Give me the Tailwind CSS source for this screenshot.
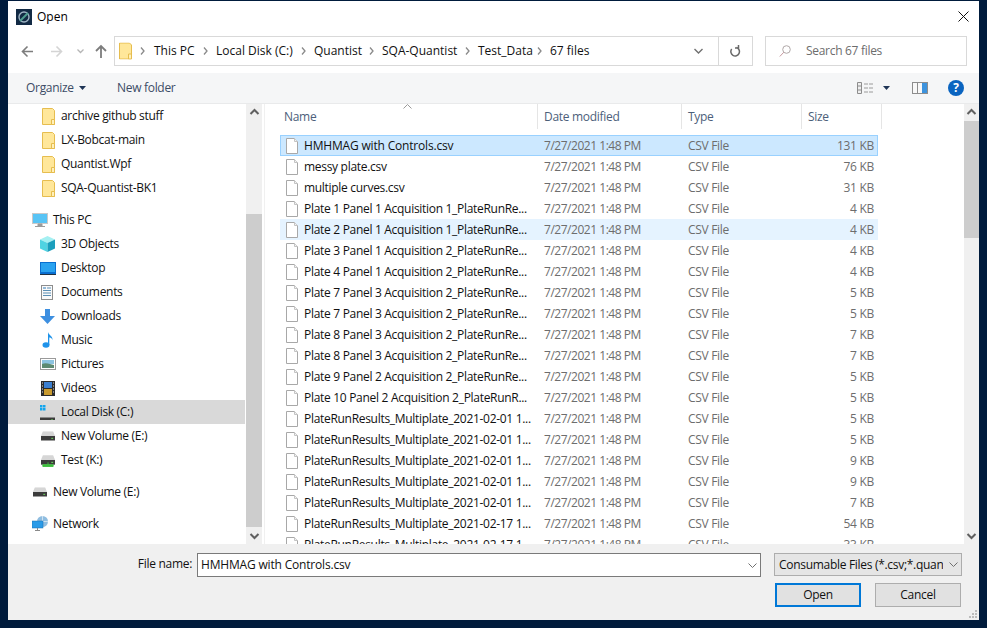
<!DOCTYPE html>
<html lang="en">
<head>
    <meta charset="UTF-8">
    <title>Open</title>
    <script src="https://cdn.jsdelivr.net/npm/@tailwindcss/browser@4"></script>
</head>
<body class="bg-[#001b3c] w-[987px] h-[628px] overflow-hidden pl-2 pt-px font-['Open_Sans',sans-serif] text-[12px] tracking-[-0.3px] text-black">
    <!-- shared icons -->
    <svg class="hidden">
        <symbol id="folder" viewBox="0 0 13 17">
            <path d="M.5.5h10l2 2v14H.5z" fill="#ffe79a" stroke="#e6bd4f"/>
            <path d="M9.500 11.500h3v5h-3z" fill="#fff0bb" stroke="#e6bd4f"/>
        </symbol>
        <symbol id="file" viewBox="0 0 12 16">
            <path d="M.5.5h8l3 3v12H.5z" fill="#fff" stroke="#a8a8a8"/>
            <path d="M8.500.5v3h3" fill="#f3f3f3" stroke="#c4c4c4"/>
        </symbol>
        <symbol id="drive" viewBox="0 0 15 10">
            <path d="M2 0h11l2 5H0z" fill="#d6d6d6"/>
            <rect y="5" width="15" height="5" fill="#3c3c3c"/>
            <rect x="11" y="7" width="2" height="1" fill="#6fe060"/>
        </symbol>
        <symbol id="sep" viewBox="0 0 5 8">
            <path d="M1 .5 4 4 1 7.500" fill="none" stroke="#8a8a8a" stroke-width="1.300"/>
        </symbol>
    </svg>

    <div class="w-[971px] h-[619px] bg-white flex flex-col">
        <!-- title bar -->
        <div class="h-[31px] shrink-0 flex items-center pl-2 pr-[10px]">
            <svg class="w-4 h-4 mr-[5px]" viewBox="0 0 16 16">
                <rect width="16" height="16" fill="#122a44"/>
                <circle cx="8" cy="8" r="5" fill="none" stroke="#9fb4c4" stroke-width="1.400"/>
                <path d="M4 12 12 4" stroke="#4f9d8f" stroke-width="2"/>
            </svg>
            <span class="flex-1 tracking-normal">Open</span>
            <svg class="w-[11px] h-[11px]" viewBox="0 0 11 11"><path d="M.5.5l10 10M10.500.5l-10 10" stroke="#111" fill="none"/></svg>
        </div>

        <!-- navigation bar -->
        <div class="h-[41px] shrink-0 flex pt-1 pl-[13px]">
            <svg class="w-3 h-[30px]" viewBox="0 0 12 30"><path d="M12 15.500H1.500M6.500 10.500l-5 5 5 5" fill="none" stroke="#7d7d7d" stroke-width="1.600"/></svg>
            <svg class="w-3 h-[30px] ml-[18px]" viewBox="0 0 12 30"><path d="M0 15.500h10.500M5.500 10.500l5 5-5 5" fill="none" stroke="#d4d4d4" stroke-width="1.600"/></svg>
            <svg class="w-[7px] h-[30px] ml-[14px]" viewBox="0 0 7 30"><path d="M.5 13.500l3 3 3-3" fill="none" stroke="#b5b5b5" stroke-width="1.300"/></svg>
            <svg class="w-3 h-[30px] ml-[11px]" viewBox="0 0 12 30"><path d="M6 22V10M1 15l5-5 5 5" fill="none" stroke="#7d7d7d" stroke-width="1.800"/></svg>
            <div class="w-[639px] h-[30px] ml-[7px] border border-[#d9d9d9] flex items-center">
                <svg class="w-[13px] h-[18px] ml-1" viewBox="0 0 13 17"><use href="#folder"/></svg>
                <div class="flex-1 flex items-center text-[#111] pl-[8px] tracking-normal">
                    <svg class="w-[5px] h-2 mr-[9px]" viewBox="0 0 5 8"><use href="#sep"/></svg>
                    <div class="w-[62px] flex items-center justify-between pr-[8px]"><span>This PC</span><svg class="w-[5px] h-2" viewBox="0 0 5 8"><use href="#sep"/></svg></div>
                    <div class="w-[98px] flex items-center justify-between pr-[8px]"><span>Local Disk (C:)</span><svg class="w-[5px] h-2" viewBox="0 0 5 8"><use href="#sep"/></svg></div>
                    <div class="w-[68px] flex items-center justify-between pr-[8px]"><span>Quantist</span><svg class="w-[5px] h-2" viewBox="0 0 5 8"><use href="#sep"/></svg></div>
                    <div class="w-[96px] flex items-center justify-between pr-[8px]"><span>SQA-Quantist</span><svg class="w-[5px] h-2" viewBox="0 0 5 8"><use href="#sep"/></svg></div>
                    <div class="w-[72px] flex items-center justify-between pr-[8px]"><span>Test_Data</span><svg class="w-[5px] h-2" viewBox="0 0 5 8"><use href="#sep"/></svg></div>
                    <span>67 files</span>
                </div>
                <svg class="w-[9px] h-[6px] mr-[15px]" viewBox="0 0 9 6"><path d="M.5 1l4 4 4-4" fill="none" stroke="#707070" stroke-width="1.400"/></svg>
                <div class="w-[34px] h-full border-l border-[#d9d9d9] flex items-center justify-center">
                    <svg class="w-[11px] h-[13px]" viewBox="0 0 11 13"><path d="M4.500 2.500a4.300 4.300 0 1 0 4.800 1.500M2.500 0v3h3.500" fill="none" stroke="#6a6a6a" stroke-width="1.500" transform="translate(11 0) scale(-1 1)"/></svg>
                </div>
            </div>
            <div class="w-[202px] h-[30px] ml-3 border border-[#d9d9d9] flex items-center text-[#6d6d6d] pl-[13px]">
                <svg class="w-3 h-3 mr-[15px]" viewBox="0 0 12 12"><circle cx="7.500" cy="4.500" r="3.800" fill="none" stroke="#b0a8a8"/><path d="M4.800 7.200.8 11.500" stroke="#c79aa0"/></svg>
                Search 67 files
            </div>
        </div>

        <!-- toolbar -->
        <div class="h-[31px] shrink-0 bg-[#f5f6f7] border-b border-[#e9eaeb] flex items-center text-[#3c4c66] pl-[18px] pr-[15px]">
            <span class="w-[48px]">Organize</span>
            <svg class="w-[7px] h-1 ml-[5px]" viewBox="0 0 7 4"><path d="M0 0h7L3.500 4z" fill="#1f3556"/></svg>
            <span class="ml-[31px] flex-1">New folder</span>
            <svg class="w-4 h-3" viewBox="0 0 16 12"><path d="M.5.500h4v11h-4zM.5 4h4M.5 8h4" fill="#eee" stroke="#8d8d8d"/><path d="M7 2h4M12 2h4M7 6h4M12 6h4M7 10h4M12 10h4" stroke="#9a9a9a"/></svg>
            <svg class="w-[7px] h-1 ml-[10px]" viewBox="0 0 7 4"><path d="M0 0h7L3.500 4z" fill="#1f3556"/></svg>
            <svg class="w-4 h-3 ml-[22px]" viewBox="0 0 16 12"><rect x=".5" y=".5" width="15" height="11" fill="#f8f8f8" stroke="#8d8d8d"/><rect x="10" y="1" width="5" height="10" fill="#3d93dd"/><path d="M5.500 1v10" stroke="#8d8d8d"/></svg>
            <div class="w-4 h-4 ml-5 rounded-full bg-[#0a64c0] text-white text-[12px] font-bold flex items-center justify-center">?</div>
        </div>

        <!-- main area -->
        <div class="h-[440px] shrink-0 flex overflow-hidden">
            <!-- navigation pane -->
            <div class="w-[237px] shrink-0 text-[#111]">
                <div class="h-6 flex items-center pl-[34px]"><svg class="w-[13px] h-[17px] mr-[6px]" viewBox="0 0 13 17"><use href="#folder"/></svg>archive github stuff</div>
                <div class="h-6 flex items-center pl-[34px]"><svg class="w-[13px] h-[17px] mr-[6px]" viewBox="0 0 13 17"><use href="#folder"/></svg>LX-Bobcat-main</div>
                <div class="h-6 flex items-center pl-[34px]"><svg class="w-[13px] h-[17px] mr-[6px]" viewBox="0 0 13 17"><use href="#folder"/></svg>Quantist.Wpf</div>
                <div class="h-6 flex items-center pl-[34px]"><svg class="w-[13px] h-[17px] mr-[6px]" viewBox="0 0 13 17"><use href="#folder"/></svg>SQA-Quantist-BK1</div>

                <div class="h-6 mt-2 flex items-center pl-6">
                    <svg class="w-4 h-[15px] mr-[5px]" viewBox="0 0 16 15"><rect width="16" height="11" fill="#c9c9c9"/><rect x="1" y="1" width="14" height="9" fill="#58c4f5"/><path d="M6 11h4v2H6zM3 13.500h10" fill="#9b9b9b" stroke="#9b9b9b"/></svg>This PC
                </div>
                <div class="h-6 flex items-center pl-[32px]">
                    <svg class="w-[15px] h-4 mr-[6px]" viewBox="0 0 15 16"><path d="M7.500 0 15 3.500 7.500 7 0 3.500z" fill="#a5f0f2"/><path d="M0 3.500 7.500 7v9L0 12.500z" fill="#4fd3e2"/><path d="M15 3.500 7.500 7v9l7.500-3.500z" fill="#1b9fbd"/></svg>3D Objects
                </div>
                <div class="h-6 flex items-center pl-[32px]">
                    <svg class="w-4 h-[13px] mr-[5px]" viewBox="0 0 16 13"><rect width="16" height="12" fill="#0a6fd0"/><rect x="1" y="1" width="14" height="9" fill="#2aa3f0"/><path d="M0 12.500h16" stroke="#234"/></svg>Desktop
                </div>
                <div class="h-6 flex items-center pl-[33px]">
                    <svg class="w-3 h-[15px] mr-[8px]" viewBox="0 0 12 15"><rect x=".5" y=".5" width="11" height="14" fill="#fafafa" stroke="#8d8d8d"/><path d="M6 3h4M2 5.500h8M2 8h8M2 10.500h8" stroke="#5b8fb5"/><path d="M2 3h3" stroke="#2a79b8"/></svg>Documents
                </div>
                <div class="h-6 flex items-center pl-[32px]">
                    <svg class="w-[15px] h-[15px] mr-[6px]" viewBox="0 0 15 15"><path d="M5 0h5v7h5l-7.500 8L0 7h5z" fill="#3d8fe0"/></svg>Downloads
                </div>
                <div class="h-6 flex items-center pl-[34px]">
                    <svg class="w-[12px] h-4 mr-[7px]" viewBox="0 0 12 16"><ellipse cx="4" cy="13" rx="3.500" ry="2.800" fill="#1f93ea"/><path d="M6 13V0c.5 3 5 4 4.500 8C10 6 8 5.500 7.300 5.500V13z" fill="#1f93ea"/></svg>Music
                </div>
                <div class="h-6 flex items-center pl-[32px]">
                    <svg class="w-4 h-3 mr-[5px]" viewBox="0 0 16 12"><rect x=".5" y=".5" width="15" height="11" fill="#fff" stroke="#9a9a9a"/><rect x="2" y="2" width="12" height="4" fill="#8cc3e0"/><path d="M2 6c4-2 8 0 12 1v3H2z" fill="#5d8a72"/></svg>Pictures
                </div>
                <div class="h-6 flex items-center pl-[33px]">
                    <svg class="w-[14px] h-[15px] mr-[6px]" viewBox="0 0 14 15"><rect width="14" height="15" fill="#2b2b2b"/><rect x="3" y="1" width="8" height="6" fill="#3b7fd0"/><rect x="3" y="8" width="8" height="6" fill="#c99a2e"/><path d="M1 2h1M1 5h1M1 8h1M1 11h1M12 2h1M12 5h1M12 8h1M12 11h1" stroke="#ddd"/></svg>Videos
                </div>
                <div class="h-6 bg-[#d9d9d9] flex items-center pl-[32px]">
                    <svg class="w-[15px] h-[15px] mr-[6px]" viewBox="0 0 15 15"><path d="M0 0h2.500v2.500H0zM3 0h2.500v2.500H3zM0 3h2.500v2.500H0zM3 3h2.500v2.500H3z" fill="#12a5ee"/><use href="#drive" y="5"/></svg>Local Disk (C:)
                </div>
                <div class="h-6 flex items-center pl-[33px]">
                    <svg class="w-[14px] h-[10px] mr-[6px]" viewBox="0 0 15 10"><use href="#drive"/></svg>New Volume (E:)
                </div>
                <div class="h-6 flex items-center pl-[33px]">
                    <svg class="w-[14px] h-[14px] mr-[6px]" viewBox="0 0 15 15"><use href="#drive"/><path d="M7.500 10v2M2 12.500h11v2H2z" fill="#3dbd3d" stroke="#3dbd3d"/></svg>Test (K:)
                </div>

                <div class="h-6 mt-2 flex items-center pl-[25px]">
                    <svg class="w-[14px] h-[10px] mr-[6px]" viewBox="0 0 15 10"><use href="#drive"/></svg>New Volume (E:)
                </div>
                <div class="h-6 mt-2 flex items-center pl-6">
                    <svg class="w-4 h-4 mr-[5px]" viewBox="0 0 16 16"><circle cx="10.500" cy="5.500" r="5.500" fill="#8fbde0"/><path d="M10.500 0v11M5 5.500h11" stroke="#cfe3f2"/><rect y="5" width="11" height="7" fill="#2a9be8" stroke="#1a6fb0" stroke-width=".5"/><path d="M3 14.500h5M5.500 12v2" stroke="#8a8a8a"/></svg>Network
                </div>
            </div>

            <!-- navigation scrollbar -->
            <div class="w-[16px] shrink-0 ml-px bg-[#f0f0f0] flex flex-col items-center">
                <svg class="w-[15px] h-[17px] shrink-0" viewBox="0 0 15 17"><path d="M3.500 10l4-4 4 4" fill="none" stroke="#606060" stroke-width="2"/></svg>
                <div class="w-full h-[93px] shrink-0"></div>
                <div class="w-full h-[313px] shrink-0 bg-[#cdcdcd]"></div>
                <svg class="w-[15px] h-[17px] shrink-0" viewBox="0 0 15 17"><path d="M3.500 7l4 4 4-4" fill="none" stroke="#606060" stroke-width="2"/></svg>
            </div>
            <div class="w-[3px] shrink-0 bg-white border-r border-[#f0f0f0]"></div>

            <!-- file list -->
            <div class="w-[699px] shrink-0">
                <div class="h-[25px] flex text-[#4c607a] relative">
                    <div class="w-[273px] pl-[19px] flex items-center border-r border-[#e5e5e5]">Name</div>
                    <div class="w-[144px] pl-[6px] flex items-center border-r border-[#e5e5e5]">Date modified</div>
                    <div class="w-[120px] pl-[6px] flex items-center border-r border-[#e5e5e5]">Type</div>
                    <div class="w-[80px] pl-[6px] flex items-center border-r border-[#e5e5e5]">Size</div>
                    <svg class="absolute left-[138px] top-0 w-[9px] h-[5px]" viewBox="0 0 9 5"><path d="M.5 4.500l4-4 4 4" fill="none" stroke="#9a9a9a"/></svg>
                </div>
                <div class="pt-[6px] ml-[15px] w-[598px] [&>div>span:nth-of-type(2)]:tracking-[-0.47px]">
                    <div class="h-[21px] flex items-center bg-[#cce8ff] border border-[#99d1ff] text-[#111]"><svg class="w-3 h-4 ml-[5px] mr-[6px]" viewBox="0 0 12 16"><use href="#file"/></svg><span class="w-[240px] tracking-[-0.18px]">HMHMAG with Controls.csv</span><span class="w-[144px] text-[#6d6d6d]">7/27/2021 1:48 PM</span><span class="w-[100px] text-[#6d6d6d]">CSV File</span><span class="w-[86px] text-right text-[#6d6d6d]">131 KB</span></div>
                    <div class="h-[21px] flex items-center text-[#111] px-px"><svg class="w-3 h-4 ml-[5px] mr-[6px]" viewBox="0 0 12 16"><use href="#file"/></svg><span class="w-[240px]">messy plate.csv</span><span class="w-[144px] text-[#6d6d6d]">7/27/2021 1:48 PM</span><span class="w-[100px] text-[#6d6d6d]">CSV File</span><span class="w-[86px] text-right text-[#6d6d6d]">76 KB</span></div>
                    <div class="h-[21px] flex items-center text-[#111] px-px"><svg class="w-3 h-4 ml-[5px] mr-[6px]" viewBox="0 0 12 16"><use href="#file"/></svg><span class="w-[240px]">multiple curves.csv</span><span class="w-[144px] text-[#6d6d6d]">7/27/2021 1:48 PM</span><span class="w-[100px] text-[#6d6d6d]">CSV File</span><span class="w-[86px] text-right text-[#6d6d6d]">31 KB</span></div>
                    <div class="h-[21px] flex items-center text-[#111] px-px"><svg class="w-3 h-4 ml-[5px] mr-[6px]" viewBox="0 0 12 16"><use href="#file"/></svg><span class="w-[240px]">Plate 1 Panel 1 Acquisition 1_PlateRunRe...</span><span class="w-[144px] text-[#6d6d6d]">7/27/2021 1:48 PM</span><span class="w-[100px] text-[#6d6d6d]">CSV File</span><span class="w-[86px] text-right text-[#6d6d6d]">4 KB</span></div>
                    <div class="h-[21px] flex items-center bg-[#e5f3ff] text-[#111] px-px"><svg class="w-3 h-4 ml-[5px] mr-[6px]" viewBox="0 0 12 16"><use href="#file"/></svg><span class="w-[240px]">Plate 2 Panel 1 Acquisition 1_PlateRunRe...</span><span class="w-[144px] text-[#6d6d6d]">7/27/2021 1:48 PM</span><span class="w-[100px] text-[#6d6d6d]">CSV File</span><span class="w-[86px] text-right text-[#6d6d6d]">4 KB</span></div>
                    <div class="h-[21px] flex items-center text-[#111] px-px"><svg class="w-3 h-4 ml-[5px] mr-[6px]" viewBox="0 0 12 16"><use href="#file"/></svg><span class="w-[240px]">Plate 3 Panel 1 Acquisition 2_PlateRunRe...</span><span class="w-[144px] text-[#6d6d6d]">7/27/2021 1:48 PM</span><span class="w-[100px] text-[#6d6d6d]">CSV File</span><span class="w-[86px] text-right text-[#6d6d6d]">4 KB</span></div>
                    <div class="h-[21px] flex items-center text-[#111] px-px"><svg class="w-3 h-4 ml-[5px] mr-[6px]" viewBox="0 0 12 16"><use href="#file"/></svg><span class="w-[240px]">Plate 4 Panel 1 Acquisition 2_PlateRunRe...</span><span class="w-[144px] text-[#6d6d6d]">7/27/2021 1:48 PM</span><span class="w-[100px] text-[#6d6d6d]">CSV File</span><span class="w-[86px] text-right text-[#6d6d6d]">4 KB</span></div>
                    <div class="h-[21px] flex items-center text-[#111] px-px"><svg class="w-3 h-4 ml-[5px] mr-[6px]" viewBox="0 0 12 16"><use href="#file"/></svg><span class="w-[240px]">Plate 7 Panel 3 Acquisition 2_PlateRunRe...</span><span class="w-[144px] text-[#6d6d6d]">7/27/2021 1:48 PM</span><span class="w-[100px] text-[#6d6d6d]">CSV File</span><span class="w-[86px] text-right text-[#6d6d6d]">5 KB</span></div>
                    <div class="h-[21px] flex items-center text-[#111] px-px"><svg class="w-3 h-4 ml-[5px] mr-[6px]" viewBox="0 0 12 16"><use href="#file"/></svg><span class="w-[240px]">Plate 7 Panel 3 Acquisition 2_PlateRunRe...</span><span class="w-[144px] text-[#6d6d6d]">7/27/2021 1:48 PM</span><span class="w-[100px] text-[#6d6d6d]">CSV File</span><span class="w-[86px] text-right text-[#6d6d6d]">5 KB</span></div>
                    <div class="h-[21px] flex items-center text-[#111] px-px"><svg class="w-3 h-4 ml-[5px] mr-[6px]" viewBox="0 0 12 16"><use href="#file"/></svg><span class="w-[240px]">Plate 8 Panel 3 Acquisition 2_PlateRunRe...</span><span class="w-[144px] text-[#6d6d6d]">7/27/2021 1:48 PM</span><span class="w-[100px] text-[#6d6d6d]">CSV File</span><span class="w-[86px] text-right text-[#6d6d6d]">7 KB</span></div>
                    <div class="h-[21px] flex items-center text-[#111] px-px"><svg class="w-3 h-4 ml-[5px] mr-[6px]" viewBox="0 0 12 16"><use href="#file"/></svg><span class="w-[240px]">Plate 8 Panel 3 Acquisition 2_PlateRunRe...</span><span class="w-[144px] text-[#6d6d6d]">7/27/2021 1:48 PM</span><span class="w-[100px] text-[#6d6d6d]">CSV File</span><span class="w-[86px] text-right text-[#6d6d6d]">7 KB</span></div>
                    <div class="h-[21px] flex items-center text-[#111] px-px"><svg class="w-3 h-4 ml-[5px] mr-[6px]" viewBox="0 0 12 16"><use href="#file"/></svg><span class="w-[240px]">Plate 9 Panel 2 Acquisition 2_PlateRunRe...</span><span class="w-[144px] text-[#6d6d6d]">7/27/2021 1:48 PM</span><span class="w-[100px] text-[#6d6d6d]">CSV File</span><span class="w-[86px] text-right text-[#6d6d6d]">5 KB</span></div>
                    <div class="h-[21px] flex items-center text-[#111] px-px"><svg class="w-3 h-4 ml-[5px] mr-[6px]" viewBox="0 0 12 16"><use href="#file"/></svg><span class="w-[240px]">Plate 10 Panel 2 Acquisition 2_PlateRunR...</span><span class="w-[144px] text-[#6d6d6d]">7/27/2021 1:48 PM</span><span class="w-[100px] text-[#6d6d6d]">CSV File</span><span class="w-[86px] text-right text-[#6d6d6d]">5 KB</span></div>
                    <div class="h-[21px] flex items-center text-[#111] px-px"><svg class="w-3 h-4 ml-[5px] mr-[6px]" viewBox="0 0 12 16"><use href="#file"/></svg><span class="w-[240px]">PlateRunResults_Multiplate_2021-02-01 1...</span><span class="w-[144px] text-[#6d6d6d]">7/27/2021 1:48 PM</span><span class="w-[100px] text-[#6d6d6d]">CSV File</span><span class="w-[86px] text-right text-[#6d6d6d]">5 KB</span></div>
                    <div class="h-[21px] flex items-center text-[#111] px-px"><svg class="w-3 h-4 ml-[5px] mr-[6px]" viewBox="0 0 12 16"><use href="#file"/></svg><span class="w-[240px]">PlateRunResults_Multiplate_2021-02-01 1...</span><span class="w-[144px] text-[#6d6d6d]">7/27/2021 1:48 PM</span><span class="w-[100px] text-[#6d6d6d]">CSV File</span><span class="w-[86px] text-right text-[#6d6d6d]">5 KB</span></div>
                    <div class="h-[21px] flex items-center text-[#111] px-px"><svg class="w-3 h-4 ml-[5px] mr-[6px]" viewBox="0 0 12 16"><use href="#file"/></svg><span class="w-[240px]">PlateRunResults_Multiplate_2021-02-01 1...</span><span class="w-[144px] text-[#6d6d6d]">7/27/2021 1:48 PM</span><span class="w-[100px] text-[#6d6d6d]">CSV File</span><span class="w-[86px] text-right text-[#6d6d6d]">9 KB</span></div>
                    <div class="h-[21px] flex items-center text-[#111] px-px"><svg class="w-3 h-4 ml-[5px] mr-[6px]" viewBox="0 0 12 16"><use href="#file"/></svg><span class="w-[240px]">PlateRunResults_Multiplate_2021-02-01 1...</span><span class="w-[144px] text-[#6d6d6d]">7/27/2021 1:48 PM</span><span class="w-[100px] text-[#6d6d6d]">CSV File</span><span class="w-[86px] text-right text-[#6d6d6d]">9 KB</span></div>
                    <div class="h-[21px] flex items-center text-[#111] px-px"><svg class="w-3 h-4 ml-[5px] mr-[6px]" viewBox="0 0 12 16"><use href="#file"/></svg><span class="w-[240px]">PlateRunResults_Multiplate_2021-02-01 1...</span><span class="w-[144px] text-[#6d6d6d]">7/27/2021 1:48 PM</span><span class="w-[100px] text-[#6d6d6d]">CSV File</span><span class="w-[86px] text-right text-[#6d6d6d]">7 KB</span></div>
                    <div class="h-[21px] flex items-center text-[#111] px-px"><svg class="w-3 h-4 ml-[5px] mr-[6px]" viewBox="0 0 12 16"><use href="#file"/></svg><span class="w-[240px]">PlateRunResults_Multiplate_2021-02-17 1...</span><span class="w-[144px] text-[#6d6d6d]">7/27/2021 1:48 PM</span><span class="w-[100px] text-[#6d6d6d]">CSV File</span><span class="w-[86px] text-right text-[#6d6d6d]">54 KB</span></div>
                    <div class="h-[21px] flex items-center text-[#111] px-px"><svg class="w-3 h-4 ml-[5px] mr-[6px]" viewBox="0 0 12 16"><use href="#file"/></svg><span class="w-[240px]">PlateRunResults_Multiplate_2021-02-17 1...</span><span class="w-[144px] text-[#6d6d6d]">7/27/2021 1:48 PM</span><span class="w-[100px] text-[#6d6d6d]">CSV File</span><span class="w-[86px] text-right text-[#6d6d6d]">33 KB</span></div>
                </div>
            </div>

            <!-- list scrollbar -->
            <div class="w-[15px] shrink-0 bg-[#f0f0f0] flex flex-col">
                <svg class="w-[15px] h-[17px] shrink-0" viewBox="0 0 15 17"><path d="M3.500 10l4-4 4 4" fill="none" stroke="#606060" stroke-width="2"/></svg>
                <div class="h-[117px] shrink-0 bg-[#cdcdcd]"></div>
                <div class="flex-1"></div>
                <svg class="w-[15px] h-[17px] shrink-0" viewBox="0 0 15 17"><path d="M3.500 7l4 4 4-4" fill="none" stroke="#606060" stroke-width="2"/></svg>
            </div>
        </div>

        <!-- bottom panel -->
        <div class="flex-1 bg-[#f0f0f0] relative pt-[9px]">
            <div class="flex items-start">
                <label class="w-[189px] h-[22px] flex items-center justify-end pr-[5px] text-[#111]">File name:</label>
                <div class="w-[564px] h-6 bg-white border border-[#7a7a7a] flex items-center pl-[3px] text-[#111]">
                    <span class="flex-1 tracking-[-0.18px]">HMHMAG with Controls.csv</span>
                    <svg class="w-[9px] h-[5px] mr-[3px]" viewBox="0 0 9 5"><path d="M.5.5l4 4 4-4" fill="none" stroke="#707070"/></svg>
                </div>
                <div class="w-[188px] h-[23px] ml-[13px] bg-[#e5e5e5] border border-[#adadad] flex items-center pl-1 text-[#111]">
                    <span class="w-[164px] overflow-hidden whitespace-nowrap">Consumable Files (*.csv;*.quantist)</span>
                    <svg class="w-[9px] h-[5px] ml-[6px]" viewBox="0 0 9 5"><path d="M.5.5l4 4 4-4" fill="none" stroke="#707070"/></svg>
                </div>
            </div>
            <div class="flex justify-end mt-[6px] pr-[18px]">
                <button class="w-[86px] h-6 bg-[#e1e1e1] border-2 border-[#0078d7] text-[#111]">Open</button>
                <button class="w-[86px] h-6 ml-[14px] bg-[#e1e1e1] border border-[#adadad] text-[#111]">Cancel</button>
            </div>
            <!-- resize grip -->
            <svg class="absolute right-[2px] bottom-[2px] w-[8px] h-[8px]" viewBox="0 0 8 8"><path d="M6 0h2v2H6zM3 3h2v2H3zM6 3h2v2H6zM0 6h2v2H0zM3 6h2v2H3zM6 6h2v2H6z" fill="#bcbcbc"/></svg>
        </div>
    </div>
</body>
</html>
